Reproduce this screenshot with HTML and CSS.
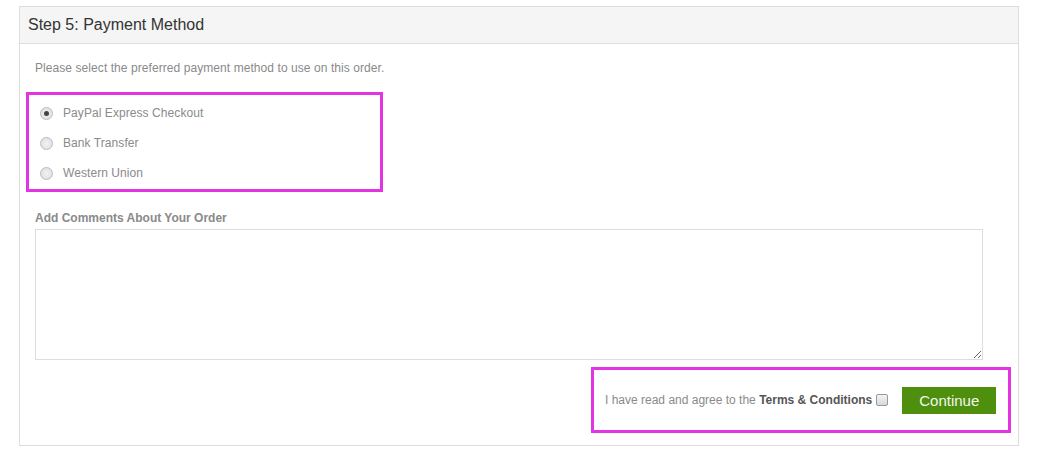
FILE: index.html
```html
<!DOCTYPE html>
<html lang="en">
<head>
    <meta charset="UTF-8">
    <title>Step 5: Payment Method</title>
    <link rel="stylesheet" href="styles.css">
</head>
<body>

<div class="panel">
    <div class="panel-heading">Step 5: Payment Method</div>

    <div class="panel-body">
        <p class="intro">Please select the preferred payment method to use on this order.</p>

        <!-- Payment methods -->
        <div class="methods highlight">
            <label class="method"><input type="radio" name="payment" checked> PayPal Express Checkout</label>
            <label class="method"><input type="radio" name="payment"> Bank Transfer</label>
            <label class="method"><input type="radio" name="payment"> Western Union</label>
        </div>

        <label class="comments-label" for="comment">Add Comments About Your Order</label>
        <textarea id="comment" class="comments"></textarea>

        <!-- Agree + continue -->
        <div class="buttons">
            <div class="agree highlight">
                <span class="agree-text">I have read and agree to the <b>Terms &amp; Conditions</b></span>
                <input type="checkbox" class="check">
                <button class="btn-continue">Continue</button>
            </div>
        </div>
    </div>
</div>

</body>
</html>
```

FILE: styles.css
```css
body {
    margin: 0;
    font-family: "Liberation Sans", Arial, sans-serif;
    font-size: 12px;
    color: #8a8a8a;
    background: #fff;
}

/* Panel box */
.panel {
    margin: 6px 0 0 19px;
    width: 998px;
    border: 1px solid #ddd;
}

.panel-heading {
    height: 36px;
    line-height: 36px;
    padding-left: 8px;
    font-size: 16px;
    color: #333;
    background-color: #f5f5f5;
    border-bottom: 1px solid #ddd;
}

.panel-body {
    padding: 15px 15px 12px 15px;
}

.intro {
    margin: 0;
    line-height: 18px;
    letter-spacing: 0.07px;
}

/* Magenta annotation boxes */
.highlight {
    border: 3px solid #e234e2;
}

.methods {
    width: 340px;
    margin: 15px 0 0 -9px;
    padding: 3px 0 1px 11px;
}

.method {
    display: flex;
    align-items: center;
    height: 30px;
    gap: 10px;
    letter-spacing: 0.07px;
}

.method input {
    appearance: none;
    -webkit-appearance: none;
    width: 13px;
    height: 13px;
    margin: 0;
    border: 1px solid #bbb;
    border-radius: 50%;
    background: radial-gradient(circle, #f2f2f2 0%, #dcdcdc 100%);
    position: relative;
}

.method input:checked::after {
    content: "";
    position: absolute;
    left: 3px;
    top: 3px;
    width: 5px;
    height: 5px;
    border-radius: 50%;
    background: #444;
}

.comments-label {
    display: block;
    margin-top: 17px;
    line-height: 18px;
    font-weight: bold;
    color: #8a8a8a;
}

.comments {
    display: block;
    box-sizing: border-box;
    width: 948px;
    height: 131px;
    margin-top: 2px;
    border: 1px solid #ddd;
    resize: vertical;
    font-family: inherit;
}

.buttons {
    display: flex;
    justify-content: flex-end;
    margin: 7px -8px 0 0;
}

.agree {
    display: flex;
    align-items: center;
    box-sizing: border-box;
    width: 420px;
    height: 66px;
    padding: 0 10px 0 11px;
}

.agree-text {
    white-space: nowrap;
    color: #8a8a8a;
}

.agree-text b {
    color: #555;
}

.check {
    appearance: none;
    -webkit-appearance: none;
    width: 12px;
    height: 12px;
    margin: 0 0 0 4px;
    border: 1px solid #999;
    border-radius: 2px;
    background: linear-gradient(#f4f4f4, #d8d8d8);
}

.btn-continue {
    width: 94px;
    height: 27px;
    margin-left: 14px;
    border: none;
    background-color: #4e8f0e;
    color: #f2f7ec;
    font-family: inherit;
    font-size: 15px;
    padding: 0;
}
```
